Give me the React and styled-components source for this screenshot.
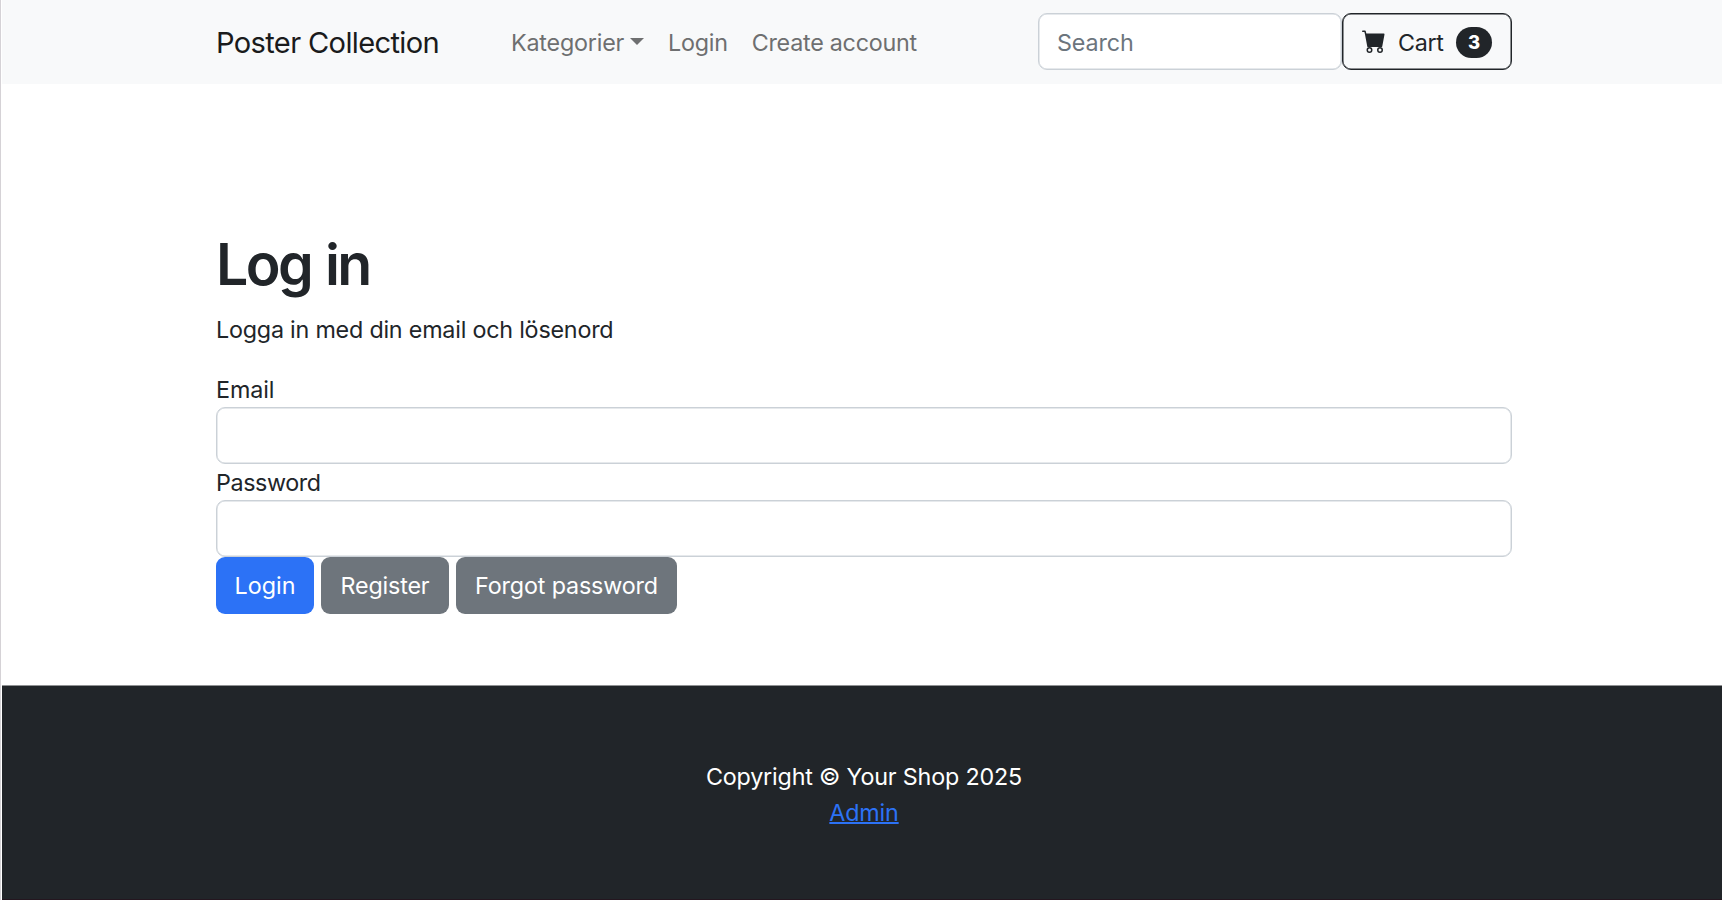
import React from 'react';
import styled, { createGlobalStyle } from 'styled-components';
import { BsCartFill } from 'react-icons/bs';

const GlobalStyle = createGlobalStyle`
  *, *::before, *::after { box-sizing: border-box; }
  body {
    margin: 0;
    background: #fff;
    color: #212529;
    font: 400 23.3px/36px Inter, "Liberation Sans", sans-serif;
    letter-spacing: -0.17px;
  }
`;

const Page = styled.div`
  height: 900px;
  display: flex;
  flex-direction: column;
  overflow: hidden;
  border-left: 1px solid #d5d2d6;
  padding-left: 1px;
`;

const Container = styled.div`
  width: 1296px;
  margin-left: 214px;
`;

const Navbar = styled.nav`
  height: 84px;
  flex: none;
  background: #f8f9fa;
`;

const NavInner = styled(Container)`
  height: 100%;
  display: flex;
  align-items: center;
`;

const Brand = styled.a`
  width: 283px;
  padding-top: 1px;
  color: #1a1b1c;
  font-size: 29.1px;
  letter-spacing: -0.65px;
`;

const NavList = styled.ul`
  display: flex;
  margin: 0;
  padding: 1px 0 0;
  list-style: none;
`;

const NavItem = styled.li`
  display: flex;
  align-items: center;
  padding: 0 12px;
  color: #6e6f70;
  letter-spacing: ${({ $spacing = '-0.2px' }) => $spacing};
`;

const Caret = styled.span`
  margin: -3px 0 0 6px;
  border: 7px solid transparent;
  border-top-color: currentColor;
  border-bottom: 0;
`;

const Tools = styled.div`
  display: flex;
  margin: -0.5px 0 0 auto;
`;

const Input = styled.input`
  display: block;
  width: ${({ $width = '100%' }) => $width};
  height: 57px;
  padding: 1px 18px 0;
  border: 1px solid #cbd1d7;
  border-radius: 9px;
  background: #fff;
  box-shadow: inset 0 0 0 0.5px #ced4da;
  color: #212529;
  font: inherit;
  letter-spacing: -0.1px;
  outline: 0;
  &::placeholder { color: #6c757d; opacity: 1; }
`;

const CartButton = styled.button`
  display: flex;
  align-items: center;
  width: 170px;
  height: 57px;
  padding: 2px 18px 0;
  border: 1px solid #212529;
  border-radius: 9px;
  background: transparent;
  box-shadow: inset 0 0 0 0.5px #212529;
  color: #212529;
  font: inherit;
  letter-spacing: -0.3px;
  svg { flex: none; margin: -3px 12.5px 0 0.5px; }
`;

const Badge = styled.span`
  display: flex;
  align-items: center;
  justify-content: center;
  width: 36px;
  height: 30.5px;
  margin: -1px 0 0 12.5px;
  border-radius: 16px;
  background: #212529;
  color: #fff;
  font-size: 18.5px;
  font-weight: 800;
  letter-spacing: 0;
`;

const Main = styled(Container)`
  height: 601px;
  flex: none;
  padding-top: 151px;
`;

const Title = styled.h1`
  margin: 0 0 16.5px;
  font-size: 57.2px;
  font-weight: 600;
  line-height: 60px;
  letter-spacing: -2.6px;
  word-spacing: 2px;
`;

const Lead = styled.p`
  margin: 0 0 23.5px;
  letter-spacing: -0.21px;
`;

const Label = styled.label`
  display: block;
  padding-top: 1px;
  line-height: 35px;
  letter-spacing: ${({ $spacing = '-0.1px' }) => $spacing};
`;

const Actions = styled.div`
  display: flex;
  gap: 7px;
  margin-top: -0.5px;
`;

const Button = styled.button`
  width: ${({ $width }) => $width};
  height: 57px;
  padding: 1px 0 0;
  border: 0;
  border-radius: 9px;
  background: ${({ $primary }) => ($primary ? '#2c72f6' : '#6e757c')};
  color: #fff;
  font: inherit;
  letter-spacing: ${({ $spacing = '-0.15px' }) => $spacing};
`;

const Footer = styled.footer`
  flex: 1;
  padding: 72.5px 0 0 4px;
  border-top: 1px solid #8f9193;
  border-bottom: 1px solid #24161f;
  background: #212529;
  color: #fff;
  text-align: center;
  p { margin: 0; }
  a { color: #2c72f6; text-decoration: underline; text-decoration-thickness: 2px; }
`;

export default function App() {
  return (
    <>
      <GlobalStyle />
      <Page>
        <Navbar>
          <NavInner>
            <Brand>Poster Collection</Brand>
            <NavList>
              <NavItem>Kategorier<Caret /></NavItem>
              <NavItem $spacing="-0.25px">Login</NavItem>
              <NavItem $spacing="-0.25px">Create account</NavItem>
            </NavList>
            <Tools>
              <Input $width="304px" type="search" placeholder="Search" aria-label="Search" />
              <CartButton type="button">
                <BsCartFill size={24} />
                Cart
                <Badge>3</Badge>
              </CartButton>
            </Tools>
          </NavInner>
        </Navbar>
        <Main as="main">
          <Title>Log in</Title>
          <Lead>Logga in med din email och lösenord</Lead>
          <form>
            <Label htmlFor="email">Email</Label>
            <Input id="email" type="email" />
            <Label htmlFor="password" $spacing="-0.4px">Password</Label>
            <Input id="password" type="password" />
            <Actions>
              <Button type="button" $primary $width="98px" $spacing="0">Login</Button>
              <Button type="button" $width="128px">Register</Button>
              <Button type="button" $width="221px">Forgot password</Button>
            </Actions>
          </form>
        </Main>
        <Footer>
          <p>Copyright © Your Shop 2025</p>
          <a>Admin</a>
        </Footer>
      </Page>
    </>
  );
}
